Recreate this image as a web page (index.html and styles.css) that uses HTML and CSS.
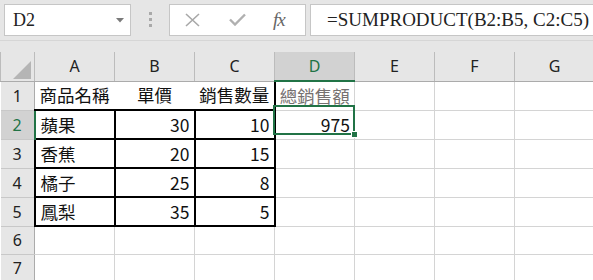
FILE: index.html
```html
<!DOCTYPE html>
<html lang="zh-Hant">
<head>
    <meta charset="UTF-8">
    <title>SUMPRODUCT</title>
    <link rel="stylesheet" href="styles.css">
</head>
<body>
    <!-- formula bar -->
    <div class="toolbar">
        <div class="namebox">
            <span class="ref">D2</span>
            <svg class="caret" width="8" height="5" viewBox="0 0 8 5"><path d="M0 0h8L4 4.5z" fill="#7a7a7a"/></svg>
        </div>
        <div class="grip"><i></i><i></i><i></i></div>
        <div class="btnbox">
            <svg width="17" height="14" viewBox="0 0 17 14"><path d="M2 1l13 12M15 1L2 13" stroke="#a8a8a8" stroke-width="1.6" fill="none"/></svg>
            <svg width="17" height="13" viewBox="0 0 17 13"><path d="M1 6.5l5 5L16 1.5" stroke="#b0b0b0" stroke-width="2.4" fill="none"/></svg>
            <span class="fx">fx</span>
        </div>
        <div class="formula">=SUMPRODUCT(B2:B5, C2:C5)</div>
    </div>
    <div class="gap"></div>

    <!-- grid -->
    <div class="grid-wrap">
        <table class="sheet">
            <colgroup>
                <col class="c-head">
                <col class="c-col"><col class="c-col"><col class="c-col"><col class="c-col">
                <col class="c-col"><col class="c-col"><col class="c-col">
            </colgroup>
            <tr class="colheads">
                <th class="corner"><span class="tri"></span></th>
                <th>A</th><th>B</th><th>C</th><th class="on">D</th><th>E</th><th>F</th><th>G</th>
            </tr>
            <tr>
                <th class="rh">1</th>
                <td class="h1">商品名稱</td><td class="h1">單價</td><td class="h1 last">銷售數量</td>
                <td class="h1 total">總銷售額</td><td></td><td></td><td></td>
            </tr>
            <tr>
                <th class="rh on">2</th>
                <td class="bx">蘋果</td><td class="bx num">30</td><td class="bx num">10</td>
                <td class="num">975</td><td></td><td></td><td></td>
            </tr>
            <tr>
                <th class="rh">3</th>
                <td class="bx">香蕉</td><td class="bx num">20</td><td class="bx num">15</td>
                <td></td><td></td><td></td><td></td>
            </tr>
            <tr>
                <th class="rh">4</th>
                <td class="bx">橘子</td><td class="bx num">25</td><td class="bx num">8</td>
                <td></td><td></td><td></td><td></td>
            </tr>
            <tr>
                <th class="rh">5</th>
                <td class="bx">鳳梨</td><td class="bx num">35</td><td class="bx num">5</td>
                <td></td><td></td><td></td><td></td>
            </tr>
            <tr class="short">
                <th class="rh">6</th>
                <td></td><td></td><td></td><td></td><td></td><td></td><td></td>
            </tr>
            <tr class="short">
                <th class="rh">7</th>
                <td></td><td></td><td></td><td></td><td></td><td></td><td></td>
            </tr>
            <tr class="short">
                <th class="rh"></th>
                <td></td><td></td><td></td><td></td><td></td><td></td><td></td>
            </tr>
        </table>
        <!-- active cell D2 -->
        <div class="active"></div>
    </div>
</body>
</html>
```

FILE: styles.css
```css
body {
    margin: 0;
    background: #fff;
    overflow: hidden;
    width: 593px;
    height: 280px;
    font-family: "Noto Sans CJK TC", sans-serif;
}
.toolbar {
    display: flex;
    align-items: center;
    height: 41px;
    box-sizing: border-box;
    padding: 0 0 1px 4px;
    background: #e6e6e6;
    border-bottom: 1px solid #d6d6d6;
}
.namebox, .btnbox, .formula {
    height: 32px;
    box-sizing: border-box;
    background: #fff;
    border: 1px solid #c6c6c6;
    display: flex;
    align-items: center;
}
.namebox {
    width: 127px;
    padding: 0 6px 0 8px;
    justify-content: space-between;
}
.ref {
    font-family: "Liberation Serif", serif;
    font-size: 18px;
    color: #222;
    padding-top: 1px;
}
.caret {
    margin-top: 1px;
}
.grip {
    width: 38px;
    display: flex;
    flex-direction: column;
    align-items: center;
    gap: 3px;
}
.grip i {
    width: 3px;
    height: 3px;
    background: #a9a9a9;
}
.btnbox {
    width: 137px;
    padding: 0 0 0 14px;
    gap: 28px;
}
.fx {
    font-family: "Liberation Serif", serif;
    font-style: italic;
    font-size: 19px;
    color: #666;
    margin-left: -1px;
    letter-spacing: -1px;
}
.formula {
    flex: 1;
    margin-left: 4px;
    border-right: none;
    padding-left: 16px;
    font-family: "Liberation Serif", serif;
    font-size: 19px;
    color: #222;
    white-space: nowrap;
}
.gap {
    height: 11px;
    background: #e6e6e6;
}
.grid-wrap {
    position: relative;
}
.sheet {
    border-collapse: collapse;
    table-layout: fixed;
    width: 594px;
}
.c-head {
    width: 34px;
}
.c-col {
    width: 80px;
}
.sheet th {
    background: #e6e6e6;
    font-family: "Noto Sans", "Open Sans", sans-serif;
    font-weight: normal;
    font-size: 16px;
    color: #222;
    padding: 0;
    text-align: center;
}
.colheads th {
    height: 24px;
    border-left: 1px solid #bcbcbc;
    border-right: 1px solid #bcbcbc;
    border-bottom: 1px solid #ababab;
}
.colheads th.on {
    background: #d2d2d2;
    color: #217346;
    border-bottom: 2px solid #217346;
}
.corner {
    position: relative;
}
.tri {
    position: absolute;
    right: 3px;
    bottom: 2px;
    width: 0;
    height: 0;
    border-left: 18px solid transparent;
    border-bottom: 18px solid #b5b5b5;
}
.sheet .rh {
    border-right: 1px solid #ababab;
    border-bottom: 1px solid #c8c8c8;
}
.sheet .rh.on {
    background: #d2d2d2;
    color: #217346;
    border-right: 2px solid #217346;
}
.sheet tr {
    height: 29px;
}
.sheet tr.short {
    height: 28px;
}
.sheet td {
    border: 1px solid #d4d4d4;
    padding: 0 4px 0 5px;
    font-size: 17.5px;
    color: #111;
    white-space: nowrap;
    overflow: hidden;
    line-height: 26px;
}
.sheet td.h1 {
    text-align: center;
    padding: 0;
    border-right: 1px solid #fff;
    border-bottom: 2px solid #000;
}
.sheet td.h1.last {
    border-right: 2px solid #000;
}
.sheet td.total {
    color: #767171;
    border-right: 1px solid #d4d4d4;
    border-bottom: 1px solid #d4d4d4;
}
.sheet td.bx {
    border: 2px solid #000;
}
.sheet td.num {
    text-align: right;
}
.active {
    position: absolute;
    left: 273px;
    top: 53px;
    width: 78px;
    height: 26px;
    border: 2px solid #217346;
}
.active::after {
    content: "";
    position: absolute;
    right: -5px;
    bottom: -5px;
    width: 5px;
    height: 5px;
    background: #217346;
    border: 1px solid #fff;
}
```
